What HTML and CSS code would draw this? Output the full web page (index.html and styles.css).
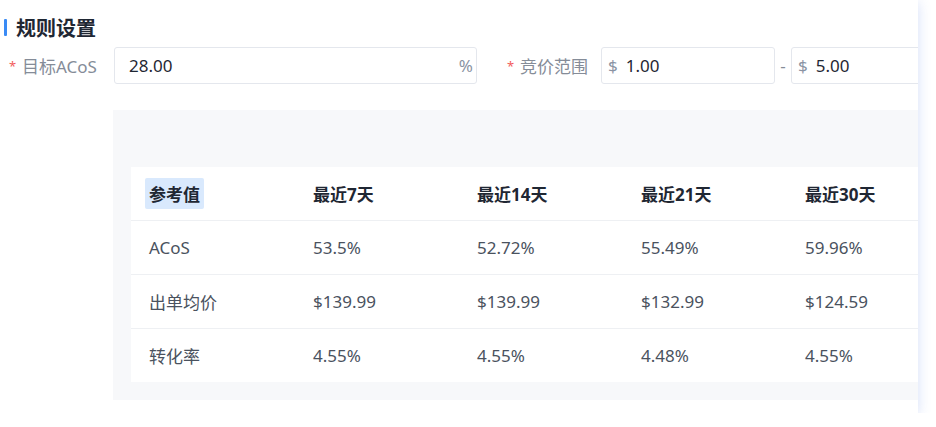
FILE: index.html
```html
<!DOCTYPE html>
<html lang="zh-CN">
<head>
  <meta charset="UTF-8" />
  <meta name="viewport" content="width=device-width, initial-scale=1.0"/>
  <title>规则设置</title>
  <link rel="stylesheet" href="styles.css">
</head>
<body>
  <div class="rule-card">
    <h3 class="rule-title">规则设置</h3>

    <!-- Form row -->
    <div class="rule-form">
      <label class="rule-label rule-label-acos"><span class="rule-req">*</span>目标ACoS</label>
      <div class="rule-input rule-input-acos">
        <span class="rule-value">28.00</span>
        <span class="rule-suffix">%</span>
      </div>

      <label class="rule-label rule-label-bid"><span class="rule-req">*</span>竞价范围</label>
      <div class="rule-input rule-input-bid">
        <span class="rule-prefix">$</span>
        <span class="rule-value">1.00</span>
      </div>
      <span class="rule-dash">-</span>
      <div class="rule-input rule-input-bid rule-input-last">
        <span class="rule-prefix">$</span>
        <span class="rule-value">5.00</span>
      </div>
    </div>

    <!-- Reference table -->
    <div class="rule-panel">
      <table class="rule-table">
        <thead>
          <tr>
            <th><span class="rule-tag">参考值</span></th>
            <th>最近7天</th>
            <th>最近14天</th>
            <th>最近21天</th>
            <th>最近30天</th>
          </tr>
        </thead>
        <tbody>
          <tr>
            <td>ACoS</td>
            <td>53.5%</td>
            <td>52.72%</td>
            <td>55.49%</td>
            <td>59.96%</td>
          </tr>
          <tr>
            <td>出单均价</td>
            <td>$139.99</td>
            <td>$139.99</td>
            <td>$132.99</td>
            <td>$124.59</td>
          </tr>
          <tr>
            <td>转化率</td>
            <td>4.55%</td>
            <td>4.55%</td>
            <td>4.48%</td>
            <td>4.55%</td>
          </tr>
        </tbody>
      </table>
    </div>
  </div>
</body>
</html>
```

FILE: styles.css
```css
:root {
  --rule-accent: #3a8bf5;
  --rule-text: #1f2733;
  --rule-body: #4a525e;
  --rule-muted: #858c98;
  --rule-border: #e4e7ed;
  --rule-line: #eef0f3;
}

html, body {
  margin: 0;
  background: #fff;
}

body {
  font-family: "Noto Sans", "Noto Sans CJK SC", sans-serif;
  color: var(--rule-text);
}

.rule-card {
  width: 918px;
  height: 413px;
  overflow: hidden;
  background: #fff;
  box-shadow: 0 2px 12px rgba(80, 120, 230, 0.24);
}

.rule-title {
  margin: 0;
  padding: 16px 0 0 4px;
  height: 22px;
  display: flex;
  align-items: center;
  gap: 9px;
  font-size: 20px;
  font-weight: bold;
  color: var(--rule-text);
}

.rule-title::before {
  content: "";
  width: 3px;
  height: 17px;
  background: var(--rule-accent);
  border-radius: 1px;
}

.rule-form {
  display: flex;
  align-items: center;
  margin-top: 9px;
  height: 37px;
  font-size: 17px;
}

.rule-label {
  box-sizing: border-box;
  display: flex;
  align-items: center;
  color: var(--rule-muted);
  white-space: nowrap;
  flex: none;
}

.rule-label-acos {
  padding-left: 9px;
  width: 114px;
}

.rule-label-bid {
  margin-left: 30px;
  width: 94px;
}

.rule-req {
  color: #f25c5c;
  width: 13px;
  font-size: 13px;
}

.rule-input {
  box-sizing: border-box;
  height: 37px;
  border: 1px solid var(--rule-border);
  border-radius: 3px;
  display: flex;
  align-items: center;
  padding: 0 3px 0 14px;
  flex: none;
}

.rule-input-acos {
  width: 363px;
}

.rule-input-bid {
  width: 174px;
  padding-left: 6px;
}

.rule-input-last {
  width: 150px;
}

.rule-value {
  color: var(--rule-text);
  font-size: 17px;
  flex: 1;
}

.rule-suffix, .rule-prefix {
  color: #8a93a3;
  font-size: 17px;
}

.rule-prefix {
  margin-right: 8px;
  flex: none;
}

.rule-dash {
  flex: none;
  width: 16px;
  text-align: center;
  color: var(--rule-muted);
}

.rule-panel {
  margin: 26px 0 0 113px;
  width: 840px;
  height: 290px;
  box-sizing: border-box;
  padding: 57px 0 0 18px;
  background: #f7f8fa;
}

.rule-table {
  border-collapse: collapse;
  background: #fff;
  table-layout: fixed;
  width: 820px;
  font-size: 17px;
}

.rule-table th, .rule-table td {
  width: 146px;
  height: 53px;
  padding: 0 0 0 18px;
  text-align: left;
  border-bottom: 1px solid var(--rule-line);
  white-space: nowrap;
}

.rule-table th {
  font-weight: bold;
  font-size: 17px;
  color: var(--rule-text);
}

.rule-table td {
  color: var(--rule-body);
}

.rule-table tbody tr:last-child td {
  border-bottom: none;
}

.rule-tag {
  display: inline-block;
  margin-left: -4px;
  padding: 3px 4px;
  border-radius: 2px;
  background: #d9e9fd;
}
```
